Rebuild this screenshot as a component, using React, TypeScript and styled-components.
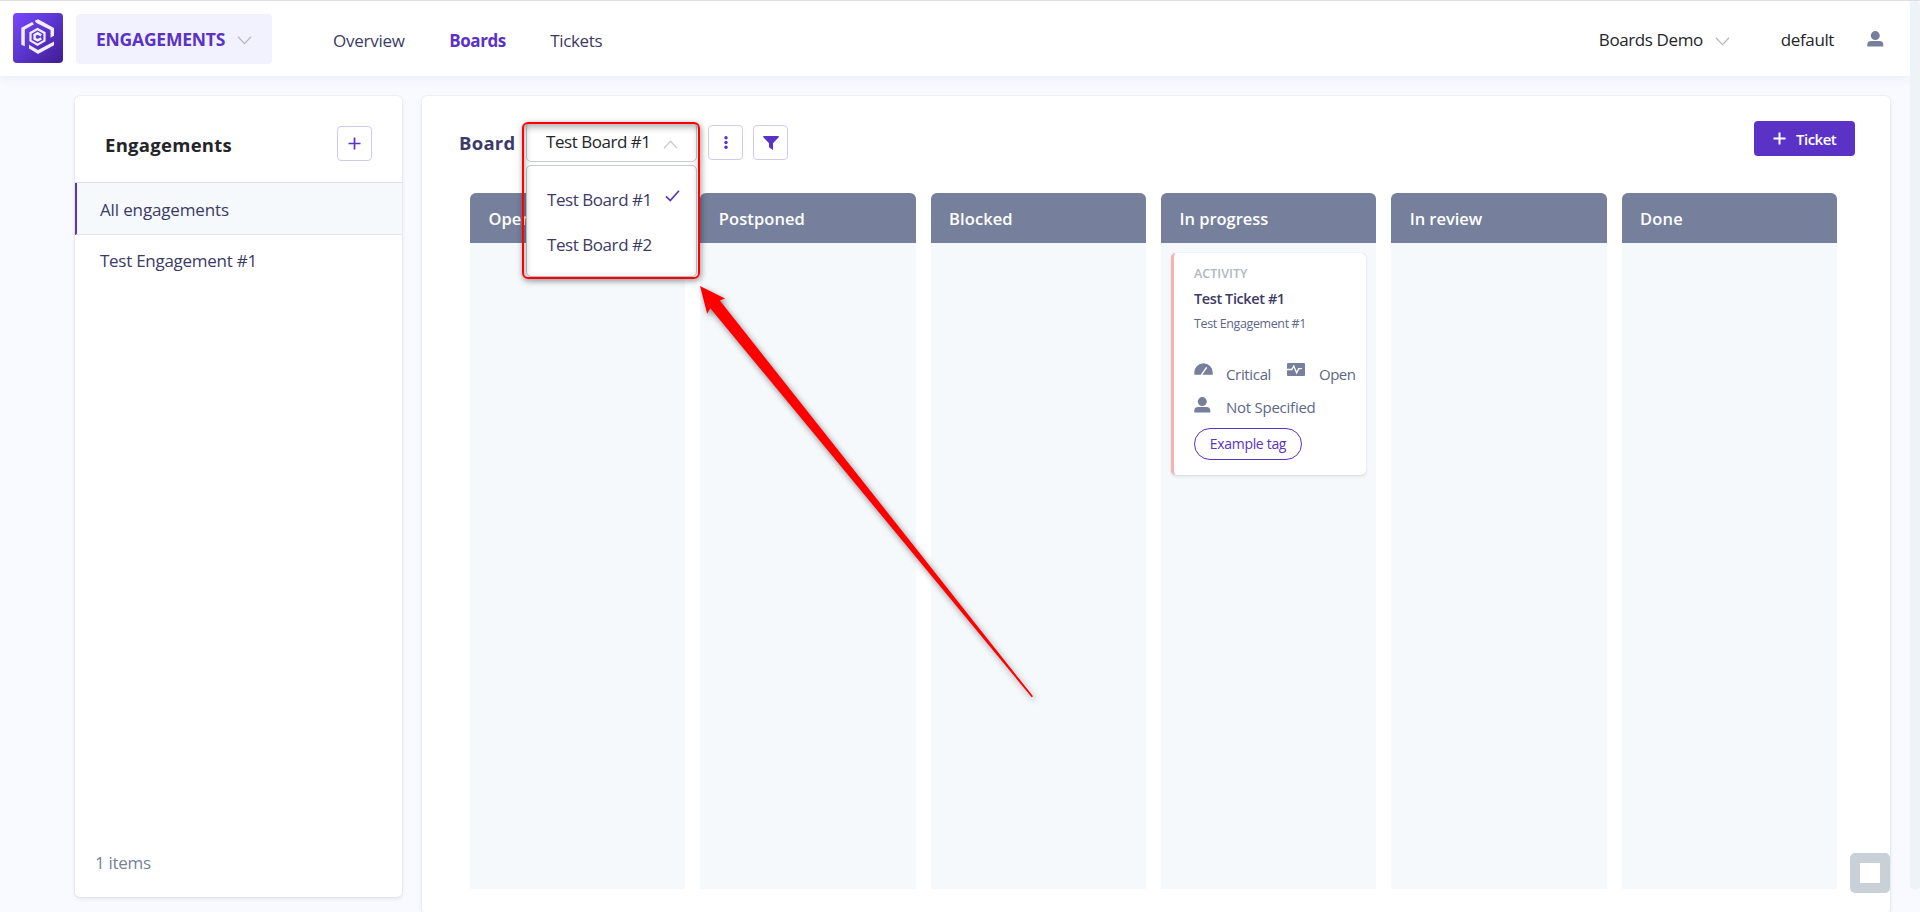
import React from 'react';
import styled, { createGlobalStyle } from 'styled-components';

const color = {
  purple: '#5a32c5',
  ink: '#3c3a66',
  slate: '#767f9b',
  text: '#232529',
  pale: '#f5f9fc',
  red: '#ff0000',
};

const GlobalStyle = createGlobalStyle`
  * { box-sizing: border-box; }
  html, body { margin: 0; padding: 0; overflow: hidden; }
  body {
    background: #f9faff;
    font-family: 'Open Sans', 'Noto Sans', sans-serif;
    font-size: 17px;
    color: ${color.ink};
  }
  svg { display: block; flex: none; }
`;

const Page = styled.div`
  position: relative;
  height: 912px;
  display: flex;
  flex-direction: column;
  border-top: 1px solid #dedede;
  overflow: hidden;
`;

const Body = styled.div`
  flex: 1;
  display: flex;
  min-height: 0;
`;

const Content = styled.div`
  flex: 1;
  display: flex;
  flex-direction: column;
  min-width: 0;
`;

const ScrollTrack = styled.div`
  width: 10px;
  height: 889px;
  border-radius: 5px;
  background: #edf3f6;
`;

const Label = styled.span<{ $size?: number; $weight?: number; $track?: number; $color?: string; $shift?: number }>`
  display: block;
  white-space: nowrap;
  line-height: 24px;
  padding-top: ${p => p.$shift ?? 0}px;
  font-size: ${p => p.$size ?? 17}px;
  font-weight: ${p => p.$weight ?? 400};
  letter-spacing: ${p => p.$track ?? -0.3}px;
  color: ${p => p.$color ?? color.ink};
`;

const Header = styled.header`
  height: 75px;
  flex: none;
  display: flex;
  align-items: center;
  padding: 0 26px 0 13px;
  background: #fff;
  box-shadow: 0 2px 10px rgba(90, 80, 200, 0.09);
`;

const Logo = styled.svg`
  width: 50px;
  height: 50px;
  margin-top: -1px;
`;

const AppSwitch = styled.button`
  height: 50px;
  width: 196px;
  margin-left: 13px;
  padding: 0 20px;
  display: flex;
  align-items: center;
  border: 0;
  border-radius: 4px;
  background: #f2f1fe;
  font-family: inherit;
  gap: 12px;
  svg { margin: 3px 0 0; }
`;

const Nav = styled.nav`
  display: flex;
  gap: 44.5px;
  margin-left: 61px;
  flex: 1;
`;

const Account = styled.div`
  display: flex;
  align-items: center;
  svg.chevron { margin: 5px 51px 0 12px; }
  svg.user { margin-left: 33px; }
`;

const Panels = styled.main`
  display: flex;
  align-items: flex-start;
  gap: 20px;
  padding: 20px 20px 0 75px;
`;

const Panel = styled.section`
  background: #fff;
  border-radius: 5px;
  box-shadow: 0 0 0 1px rgba(80, 80, 160, 0.06), 0 2px 4px rgba(60, 60, 120, 0.1);
`;

const Sidebar = styled(Panel)`
  width: 327px;
  height: 801px;
  display: flex;
  flex-direction: column;
  overflow: hidden;
`;

const SidebarHead = styled.div`
  height: 87px;
  flex: none;
  display: flex;
  align-items: flex-start;
  justify-content: space-between;
  padding: 30px 30px 0 30px;
  border-bottom: 1px solid #e0e0e2;
`;

const IconButton = styled.button`
  width: 35px;
  height: 35px;
  padding: 0;
  display: flex;
  align-items: center;
  justify-content: center;
  border: 1px solid #d3caf0;
  border-radius: 4px;
  background: #fff;
`;

const SidebarItem = styled.div<{ $active?: boolean }>`
  height: 52px;
  flex: none;
  display: flex;
  align-items: center;
  padding-left: 23px;
  border-left: 2px solid ${p => (p.$active ? color.purple : 'transparent')};
  border-bottom: 1px solid ${p => (p.$active ? '#e2e7eb' : 'transparent')};
  background: ${p => (p.$active ? color.pale : '#fff')};
`;

const SidebarFoot = styled.div`
  margin-top: auto;
  padding: 0 0 22px 20px;
`;

const BoardPanel = styled(Panel)`
  flex: 1;
  height: 818px;
`;

const BoardBar = styled.div`
  height: 97px;
  display: flex;
  align-items: flex-start;
  padding: 25px 35px 0 37px;
`;

const BoardTitle = styled(Label)`
  width: 67px;
`;

const SelectWrap = styled.div`
  position: relative;
  width: 171px;
  margin: 1px 11px 0 0;
`;

const Select = styled.div`
  height: 40px;
  display: flex;
  align-items: flex-start;
  justify-content: space-between;
  padding: 7px 18px 0 19px;
  border: 1px solid #c6cad0;
  border-radius: 5px;
  background: #fff;
  svg { margin-top: 10px; }
`;

const Menu = styled.div`
  position: absolute;
  top: 43px;
  left: 0;
  z-index: 2;
  width: 171px;
  height: 112px;
  padding: 11px 16px 0 20px;
  border: 1px solid #c6cad0;
  border-radius: 5px;
  background: #fff;
`;

const MenuItem = styled.div`
  height: 45px;
  display: flex;
  align-items: center;
  justify-content: space-between;
`;

const CheckMark = styled.svg`
  margin-bottom: 7px;
`;

const Highlight = styled.div`
  position: absolute;
  z-index: 3;
  left: -4px;
  top: 0;
  width: 178px;
  height: 157px;
  border: 2px solid ${color.red};
  border-radius: 6px;
  box-shadow: 1px 2px 6px rgba(0, 0, 0, 0.42), inset 1px 3px 7px rgba(0, 0, 0, 0.32);
`;

const Tools = styled.div`
  display: flex;
  gap: 10px;
  padding-top: 4px;
  flex: 1;
`;

const TicketButton = styled.button`
  width: 101px;
  height: 35px;
  padding: 0 0 0 19px;
  display: flex;
  align-items: center;
  gap: 10px;
  border: 0;
  border-radius: 4px;
  background: ${color.purple};
  font-family: inherit;
`;

const Columns = styled.div`
  display: grid;
  grid-template-columns: repeat(6, 1fr);
  gap: 15px;
  padding: 0 53px 0 48px;
`;

const Column = styled.div`
  height: 696px;
  background: ${color.pale};
  border-radius: 6px 6px 0 0;
  overflow: hidden;
`;

const ColumnHead = styled.div`
  height: 50px;
  display: flex;
  align-items: center;
  padding-left: 18.4px;
  background: ${color.slate};
`;

const Card = styled.article`
  margin: 10px;
  height: 222px;
  padding: 8px 0 0 20px;
  border-left: 3px solid #f5b3b3;
  border-radius: 5px;
  background: #fff;
  box-shadow: 0 0 1px rgba(80, 80, 160, 0.3), 0 2px 3px rgba(60, 60, 120, 0.1);
`;

const CardLine = styled.div<{ $h: number }>`
  height: ${p => p.$h}px;
  display: flex;
  align-items: center;
`;

const Facts = styled.div`
  display: grid;
  grid-template-columns: 93px 1fr;
  grid-auto-rows: 33px;
  margin-top: 21px;
`;

const Fact = styled.div<{ $lift: number; $gap?: number }>`
  display: flex;
  align-items: center;
  gap: ${p => p.$gap ?? 14}px;
  svg { margin-bottom: ${p => p.$lift}px; }
`;

const Tag = styled.span`
  width: 108px;
  height: 32px;
  margin-top: 5px;
  display: flex;
  align-items: center;
  justify-content: center;
  border: 1px solid ${color.purple};
  border-radius: 16px;
`;

const Arrow = styled.svg`
  position: absolute;
  left: 680px;
  top: 269px;
  z-index: 4;
  filter: drop-shadow(2px 3px 3px rgba(0, 0, 0, 0.45));
`;

const RecorderBadge = styled.div`
  position: absolute;
  left: 1850px;
  top: 852px;
  width: 40px;
  height: 40px;
  border: 10px solid #c9d0d8;
  border-radius: 5px;
  background: #fff;
`;

const Chevron = ({ up, stroke = '#b3b8c1' }: { up?: boolean; stroke?: string }) => (
  <svg className="chevron" width="15" height="9" viewBox="0 0 15 9" fill="none" stroke={stroke} strokeWidth="1.3">
    <path d={up ? 'M1 8.2 7.5 1.2 14 8.2' : 'M1 .8 7.5 7.6 14 .8'} />
  </svg>
);

const Plus = ({ stroke, width = 1.7 }: { stroke: string; width?: number }) => (
  <svg width="13" height="13" viewBox="0 0 13 13" stroke={stroke} strokeWidth={width}>
    <path d="M6.5 .5v12M.5 6.5h12" />
  </svg>
);

const UserIcon = () => (
  <svg className="user" width="17" height="16" viewBox="0 0 17 16" fill={color.slate}>
    <circle cx="8.3" cy="4.6" r="4.5" />
    <path d="M.3 15.6v-2.1C.3 11.2 2 10.1 4.3 10.1h8c2.3 0 4 1.1 4 3.4v2.1z" />
  </svg>
);

const GaugeIcon = () => (
  <svg width="19" height="12" viewBox="0 0 19 12">
    <path d="M.3 11.8v-2.3a9.2 9.2 0 0 1 18.4 0v2.3z" fill={color.slate} />
    <path d="M7.6 11.6 12.3 4.9" stroke="#fff" strokeWidth="1.5" strokeLinecap="round" />
  </svg>
);

const PulseIcon = () => (
  <svg width="18" height="13" viewBox="0 0 18 13">
    <rect width="18" height="13" rx="1" fill={color.slate} />
    <path d="M0 6.5h4.8L6.8 2.9 9.6 9.9 11.7 5.6h3.1" fill="none" stroke="#fff" strokeWidth="1.3" />
  </svg>
);

const LogoMark = () => (
  <Logo viewBox="0 0 50 50">
    <defs>
      <linearGradient id="logo" x1="0" y1="0" x2="1" y2="1">
        <stop offset="0" stopColor="#7848ff" />
        <stop offset="0.5" stopColor="#5a35cc" />
        <stop offset="1" stopColor="#401c92" />
      </linearGradient>
    </defs>
    <rect width="50" height="50" rx="4" fill="url(#logo)" />
    <g fill="#f1edfc">
      <path d="M8.3 14.7 19.2 9 21 11.3 11.8 16.6V33.3L8.3 31.7z" />
      <path d="M21.7 7.8 25 6.3 41 15v7.7l-3.5 2V17L23 9.8z" />
      <path d="M16 31.7 25 37 41 28.6v3.7L25 41 16 35.4z" />
    </g>
    <g fill="none" stroke="#f1edfc" strokeWidth="2.2">
      <path d="M24.5 16 31.5 20v7.7l-7 4-7-4V20z" />
      <path d="M28.3 22.3 24.6 20.3 21.6 22v3.7l3 1.7L28.3 25.4" strokeWidth="2.5" />
    </g>
  </Logo>
);

const TicketCard = () => (
  <Card>
    <CardLine $h={24}><Label $size={12.5} $weight={600} $track={0.04} $color="#b0b7be" $shift={1}>ACTIVITY</Label></CardLine>
    <CardLine $h={26}><Label $size={14.5} $weight={600} $track={-0.4} $shift={1}>Test Ticket #1</Label></CardLine>
    <CardLine $h={25}><Label $size={12.5} $track={-0.38} $color="#5d6787">Test Engagement #1</Label></CardLine>
    <Facts>
      <Fact $lift={9} $gap={13}><GaugeIcon /><Label $size={15} $track={-0.34} $color="#5d6787">Critical</Label></Fact>
      <Fact $lift={9}><PulseIcon /><Label $size={15} $track={-0.5} $color="#5d6787">Open</Label></Fact>
      <Fact $lift={3} $gap={15}><UserIcon /><Label $size={15} $track={-0.25} $color="#5d6787">Not Specified</Label></Fact>
    </Facts>
    <Tag><Label $size={14} $track={-0.32} $color={color.purple}>Example tag</Label></Tag>
  </Card>
);

const columns = [
  { title: 'Open', track: 0.1 },
  { title: 'Postponed', track: 0.1 },
  { title: 'Blocked', track: 0.1 },
  { title: 'In progress', track: -0.01, tickets: true },
  { title: 'In review', track: -0.05 },
  { title: 'Done', track: 0.2 },
];

export default function App() {
  return (
    <Page>
      <GlobalStyle />
      <Body>
        <Content>
          <Header>
            <LogoMark />
            <AppSwitch>
              <Label $size={17.5} $weight={700} $track={-0.22} $color={color.purple} $shift={1}>ENGAGEMENTS</Label>
              <Chevron />
            </AppSwitch>
            <Nav>
              <Label $track={-0.24} $shift={4}>Overview</Label>
              <Label $weight={700} $track={-0.44} $color={color.purple} $shift={4}>Boards</Label>
              <Label $track={-0.36} $shift={4}>Tickets</Label>
            </Nav>
            <Account>
              <Label $track={-0.4} $color={color.text} $shift={3}>Boards Demo</Label>
              <Chevron />
              <Label $track={-0.39} $color={color.text} $shift={3}>default</Label>
              <UserIcon />
            </Account>
          </Header>
          <Panels>
            <Sidebar>
              <SidebarHead>
                <Label $size={18.5} $weight={700} $track={0.28} $color={color.text} $shift={7}>Engagements</Label>
                <IconButton><Plus stroke={color.purple} /></IconButton>
              </SidebarHead>
              <SidebarItem $active><Label $track={-0.14} $shift={2}>All engagements</Label></SidebarItem>
              <SidebarItem><Label $track={-0.27}>Test Engagement #1</Label></SidebarItem>
              <SidebarFoot><Label $color={color.slate}>1 items</Label></SidebarFoot>
            </Sidebar>
            <BoardPanel>
              <BoardBar>
                <BoardTitle $size={18.5} $weight={700} $track={0.26} $shift={10}>Board</BoardTitle>
                <SelectWrap>
                  <Select>
                    <Label $track={-0.46} $color={color.text}>Test Board #1</Label>
                    <Chevron up stroke="#c6ccd2" />
                  </Select>
                  <Menu>
                    <MenuItem>
                      <Label $track={-0.44}>Test Board #1</Label>
                      <CheckMark width="15" height="12" viewBox="0 0 15 12" fill="none" stroke={color.purple} strokeWidth="1.7">
                        <path d="M1 6.3 5.3 10.5 14 .8" />
                      </CheckMark>
                    </MenuItem>
                    <MenuItem><Label $track={-0.44}>Test Board #2</Label></MenuItem>
                  </Menu>
                  <Highlight />
                </SelectWrap>
                <Tools>
                  <IconButton>
                    <svg width="4" height="13" viewBox="0 0 4 13" fill={color.purple}>
                      <circle cx="2" cy="1.8" r="1.7" /><circle cx="2" cy="6.5" r="1.7" /><circle cx="2" cy="11.2" r="1.7" />
                    </svg>
                  </IconButton>
                  <IconButton>
                    <svg width="16" height="14" viewBox="0 0 16 14" fill={color.purple}>
                      <path d="M.8 0h14.4c.7 0 .9.7.5 1.2L10 7.3V14L6 11.2V7.3L.3 1.2C-.1.7.1 0 .8 0z" />
                    </svg>
                  </IconButton>
                </Tools>
                <TicketButton>
                  <Plus stroke="#fff" width={2} />
                  <Label $size={15} $weight={600} $track={-0.5} $color="#fff">Ticket</Label>
                </TicketButton>
              </BoardBar>
              <Columns>
                {columns.map(c => (
                  <Column key={c.title}>
                    <ColumnHead><Label $size={16.5} $weight={600} $track={c.track} $color="#fff" $shift={1}>{c.title}</Label></ColumnHead>
                    {c.tickets && <TicketCard />}
                  </Column>
                ))}
              </Columns>
            </BoardPanel>
          </Panels>
        </Content>
        <ScrollTrack />
      </Body>
      <Arrow width="370" height="450" viewBox="680 270 370 450">
        <path d="M700 286 725 298.5 719.8 300.6 1033 696.3 1031.7 697.2 710.3 308.2 707.2 313.7z" fill={color.red} />
      </Arrow>
      <RecorderBadge />
    </Page>
  );
}
